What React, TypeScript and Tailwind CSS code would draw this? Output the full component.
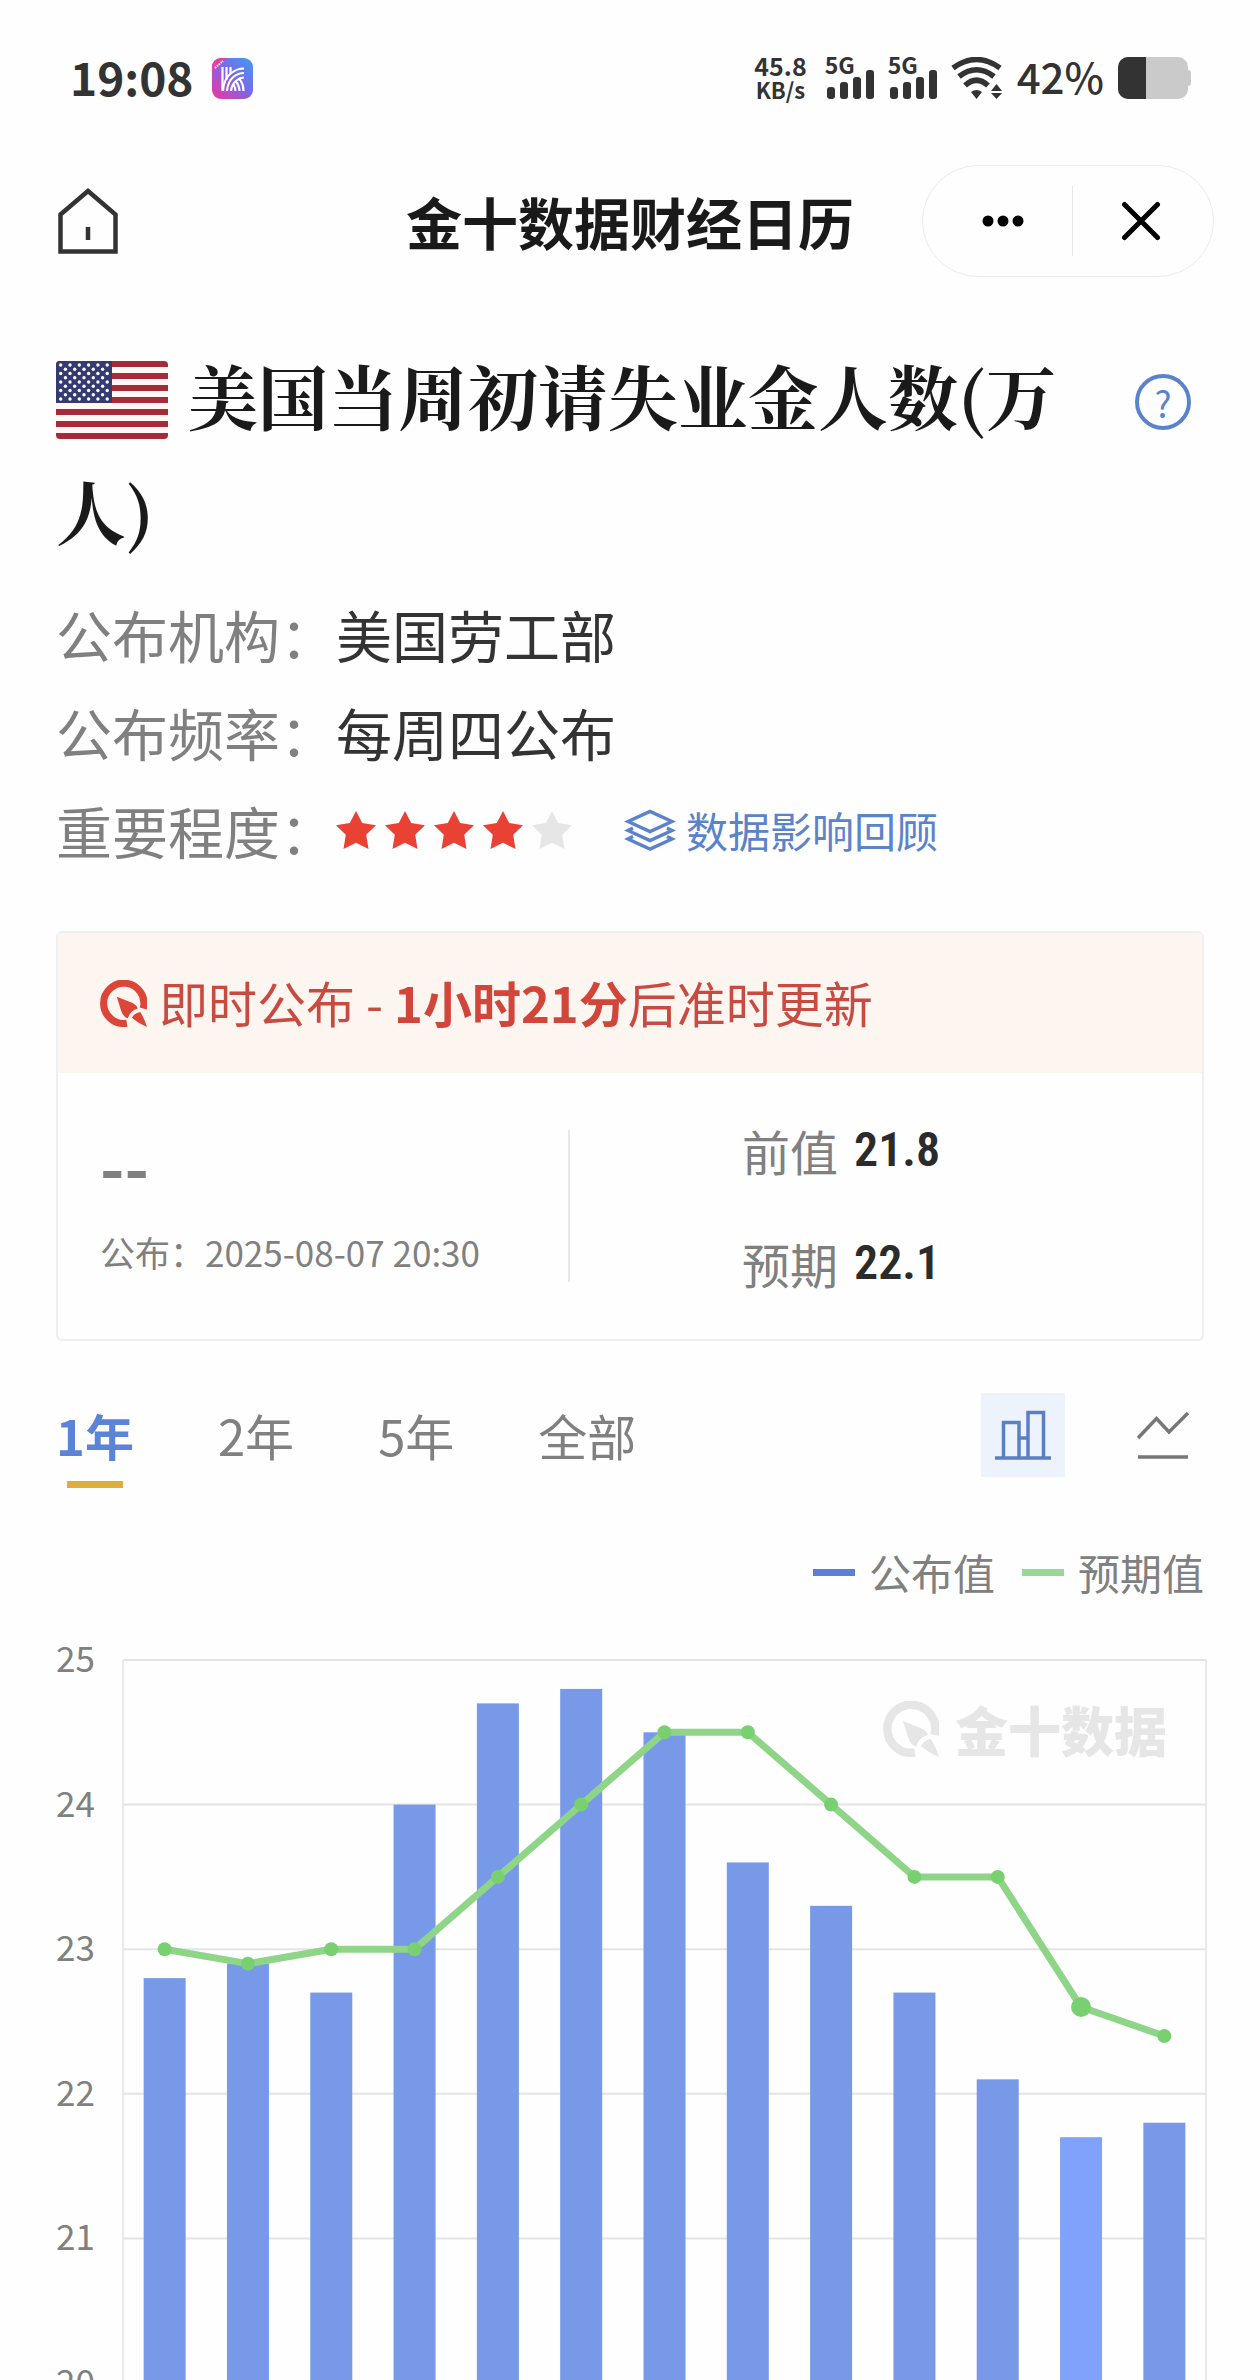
import { useState } from "react";

const sans = "font-['Noto_Sans_CJK_SC',sans-serif]";
const serif =
  "font-['Noto_Serif_CJK_SC','Noto_Serif_SC','Source_Han_Serif_SC','Liberation_Serif','Noto_Sans_CJK_SC',serif]";
const din =
  "font-['Liberation_Sans_Narrow','Roboto_Condensed','Roboto','Noto_Sans_CJK_SC',sans-serif]";

const published = [
  22.8, 22.9, 22.7, 24.0, 24.7, 24.8, 24.5, 23.6, 23.3, 22.7, 22.1, 21.7, 21.8,
];
const forecast = [
  23, 22.9, 23, 23, 23.5, 24, 24.5, 24.5, 24, 23.5, 23.5, 22.6, 22.4,
];
const ticks = [25, 24, 23, 22, 21, 20];
const activeIndex = 11;

const AppBadge = () => (
  <svg viewBox="0 0 41 41" className="size-[41px]" aria-hidden="true">
    <defs>
      <linearGradient id="badge" x1="0" y1="1" x2="1" y2="0">
        <stop offset="0" stopColor="#ec359c" />
        <stop offset="0.25" stopColor="#c04ac0" />
        <stop offset="0.5" stopColor="#7e66e4" />
        <stop offset="1" stopColor="#3f9cf0" />
      </linearGradient>
    </defs>
    <rect width="41" height="41" rx="9" fill="url(#badge)" />
    <path d="M0 13V9a9 9 0 0 1 9-9h6z" fill="#e8409c" />
    <path
      d="M3 10l8-7"
      stroke="#fff"
      strokeWidth="2"
      strokeDasharray="1.5 1"
      fill="none"
    />
    <g stroke="#fff" strokeWidth="2.200" fill="none">
      <path d="M10.500 9v24M14.500 9v13M18.500 9v7" />
      <path d="M32 10.500C25 10.500 12 15 11 33" />
      <path d="M32 15C26 15 16 19 15 33" />
      <path d="M32 19.500C28 19.500 20 23 19 33" />
      <path d="M31.500 33c0-6-2-10-5-13M27.500 33c0-4-1.500-7-4-10M23.500 33c0-3-1-5-2-6.500" />
    </g>
  </svg>
);

const Signal = () => (
  <div className="flex h-[42px] flex-col justify-between">
    <span className="h-[17px] text-[23px] leading-[15px] font-bold">5G</span>
    <div className="-mt-1 ml-0.5 flex items-end gap-[5px]">
      <i className="h-[12px] w-[8px] rounded-[3px] bg-[#333]" />
      <i className="h-[17px] w-[8px] rounded-[3px] bg-[#333]" />
      <i className="h-[22px] w-[8px] rounded-[3px] bg-[#333]" />
      <i className="h-[29px] w-[8px] rounded-[3px] bg-[#333]" />
    </div>
  </div>
);

const Wifi = () => (
  <svg viewBox="0 0 52 42" className="h-[42px] w-[52px]" aria-label="Wi-Fi">
    <g stroke="#333" strokeWidth="5.500" fill="none">
      <path d="M2 11Q25.500-6 49 11" />
      <path d="M8 19.500Q25.500 6 43 19.500" />
      <path d="M14 28.500Q25.500 18 37 28.500" />
    </g>
    <path
      d="M20 35q5.500-4 11 0l-5.500 7zM40 34h11l-5.500-7zM40 36h11l-5.500 6z"
      fill="#333"
    />
  </svg>
);

const StatusBar = () => (
  <div className="flex h-[156px] shrink-0 items-center justify-between pr-[69px] pl-[70px] text-[#333]">
    <div className="flex items-center gap-[18px]">
      <span className="pb-1 text-[46px] leading-none font-bold">19:08</span>
      <AppBadge />
    </div>
    <div className="flex items-center gap-[14px]">
      <div className="flex flex-col items-center pr-[4px] pb-0.5 font-bold">
        <span className="text-[25px] leading-[25px]">45.8</span>
        <span className="text-[22px] leading-[23px]">KB/s</span>
      </div>
      <Signal />
      <Signal />
      <Wifi />
      <span className="pb-1 text-[42px] leading-none font-medium">42%</span>
      <div className="flex items-center">
        <div className="h-[42px] w-[70px] overflow-hidden rounded-[10px] bg-[#cacaca]">
          <div className="h-full w-2/5 bg-[#333]" />
        </div>
        <div className="h-[16px] w-[3px] rounded-r bg-[#cacaca]" />
      </div>
    </div>
  </div>
);

const NavBar = () => (
  <header className="grid h-[130px] shrink-0 grid-cols-[1fr_auto_1fr] items-center px-[46px]">
    <button aria-label="首页" className="ml-3 w-[60px]">
      <svg viewBox="0 0 60 66" fill="none" stroke="#333" strokeWidth="4.500">
        <path d="M2.500 26.500L30 3L57.500 26.500V63.500H2.500Z" />
        <path d="M30 39v13" />
      </svg>
    </button>
    <h1 className="text-[56px] leading-[80px] font-bold text-[#1a1a1a]">
      金十数据财经日历
    </h1>
    <div className="flex h-[112px] w-[292px] items-center justify-self-end rounded-full border border-[#ececec]">
      <button aria-label="更多" className="flex flex-1 justify-center pl-3">
        <svg viewBox="0 0 42 12" className="h-[12px] w-[42px]">
          <circle cx="6" cy="6" r="5.500" />
          <circle cx="21" cy="6" r="5.500" />
          <circle cx="36" cy="6" r="5.500" />
        </svg>
      </button>
      <div className="h-[70px] w-px bg-[#e6e6e6]" />
      <button aria-label="关闭" className="flex flex-1 justify-center pr-1">
        <svg
          viewBox="0 0 40 40"
          className="size-[40px]"
          stroke="#000"
          strokeWidth="5"
          strokeLinecap="round"
        >
          <path d="M3.500 3.500l33 33M36.500 3.500l-33 33" />
        </svg>
      </button>
    </div>
  </header>
);

const Flag = () => (
  <svg
    viewBox="0 0 112 78"
    className="mr-[20px] mb-[14px] inline-block h-[78px] w-[112px] rounded align-middle"
    role="img"
    aria-label="美国"
  >
    <rect width="112" height="78" fill="#fff8f4" />
    {[0, 1, 2, 3, 4, 5, 6].map((i) => (
      <rect key={i} y={i * 12} width="112" height="6" fill="#a62a38" />
    ))}
    <rect width="56" height="42" fill="#353a72" />
    {Array.from({ length: 9 }).map((_, row) =>
      Array.from({ length: row % 2 ? 5 : 6 }).map((_, col) => (
        <circle
          key={`${row}-${col}`}
          cx={4.7 + col * 9.3 + (row % 2 ? 4.7 : 0)}
          cy={4 + row * 4.25}
          r="1.700"
          fill="#fff"
        />
      ))
    )}
  </svg>
);

const Star = ({ on }: { on: boolean }) => (
  <svg viewBox="0 0 40 38" className="h-[38px] w-[40px]" aria-hidden="true">
    <path
      d="M20 0l6.200 12 13.800 2.200-9.800 9.600L32.500 38 20 31.700 7.500 38l2.300-14.200L0 14.200 13.800 12z"
      fill={on ? "#e94235" : "#e6e6e6"}
    />
  </svg>
);

// Jin10 mark: open ring with a needle pointing out of the gap
const Mark = ({ className }: { className: string }) => (
  <svg viewBox="0 0 56 56" className={className} aria-hidden="true">
    <path
      d="M51.500 34A24 24 0 1 0 32 51.500"
      fill="none"
      stroke="currentColor"
      strokeWidth="8.500"
    />
    <path
      d="M20 20l19 7.500q5 3 6 6.500-9 2-12 12-6-3-8-10zM48 38q5 8 8 18-10-4-18-11 3-6 10-7z"
      fill="currentColor"
    />
  </svg>
);

const InfoRow = ({
  label,
  children,
}: {
  label: string;
  children: React.ReactNode;
}) => (
  <div className="flex h-[98px] items-center text-[56px] leading-none">
    <dt className="text-[#808080]">{label}：</dt>
    <dd className="flex items-center text-[#333]">{children}</dd>
  </div>
);

const Chart = () => {
  const left = 67;
  const right = 1150;
  const top = 45;
  const unit = 144.6;
  const slot = (right - left) / published.length;
  const x = (i: number) => left + slot * (i + 0.5);
  const y = (v: number) => top + (25 - v) * unit;
  const bottom = y(19);

  return (
    <svg
      viewBox="0 0 1151 920"
      className="block h-auto w-full"
      role="img"
      aria-label="公布值与预期值"
    >
      {ticks.map((t) => (
        <g key={t}>
          <path
            d={`M${left} ${y(t)}H${right}`}
            stroke="#e4e4e4"
            strokeWidth="2"
          />
          <text x="0" y={y(t) + 12} fontSize="35" fill="#808080">
            {t}
          </text>
        </g>
      ))}
      <path
        d={`M${left} ${top}V${bottom}M${right} ${top}V${bottom}`}
        stroke="#e9e9e9"
        strokeWidth="2"
      />
      {published.map((v, i) => (
        <rect
          key={i}
          x={x(i) - 21}
          y={y(v)}
          width="42"
          height={bottom - y(v)}
          fill={i === activeIndex ? "#80a2fc" : "#7799e8"}
        />
      ))}
      <polyline
        points={forecast.map((v, i) => `${x(i)},${y(v)}`).join(" ")}
        fill="none"
        stroke="#8fd588"
        strokeWidth="7"
        strokeLinejoin="round"
      />
      {forecast.map((v, i) => (
        <circle
          key={i}
          cx={x(i)}
          cy={y(v)}
          r={i === activeIndex ? 10 : 7}
          fill="#79d071"
        />
      ))}
    </svg>
  );
};

const ranges = ["1年", "2年", "5年", "全部"];

const App = () => {
  const [range, setRange] = useState("1年");

  return (
    <div
      className={`flex h-screen flex-col overflow-hidden bg-[#fefefe] ${sans}`}
    >
      <StatusBar />
      <NavBar />

      <main className="flex min-h-0 flex-1 flex-col px-14">
        <div className="flex shrink-0 items-start justify-between pt-[52px]">
          <h2
            className={`flex-1 text-[70px] leading-[113px] font-bold text-[#1a1a1a] ${serif}`}
          >
            <Flag />
            美国当周初请失业金人数(万人)
          </h2>
          <button
            aria-label="说明"
            className="mt-[36px] mr-[13px] ml-[70px] flex size-[56px] items-center justify-center rounded-full border-4 border-[#5b83cc] text-[36px] leading-none text-[#5b83cc]"
          >
            ?
          </button>
        </div>

        <dl className="mt-[19px] shrink-0">
          <InfoRow label="公布机构">美国劳工部</InfoRow>
          <InfoRow label="公布频率">每周四公布</InfoRow>
          <InfoRow label="重要程度">
            <span className="flex gap-[9px]" role="img" aria-label="4星">
              {[1, 2, 3, 4, 5].map((n) => (
                <Star key={n} on={n <= 4} />
              ))}
            </span>
            <a
              href="#review"
              className="ml-[52px] flex items-center gap-[10px] text-[42px] text-[#5b83cc]"
            >
              <svg
                viewBox="0 0 52 42"
                className="h-[42px] w-[52px]"
                fill="none"
                stroke="currentColor"
                strokeWidth="3.500"
              >
                <path d="M4 12.500L26 2.500l22 10L26 22.500z" />
                <path d="M9 19l-5 2.500L26 31.500l22-10L43 19" />
                <path d="M9 27.500L4 30l22 10 22-10-5-2.500" />
              </svg>
              数据影响回顾
            </a>
          </InfoRow>
        </dl>

        <section className="mt-[52px] shrink-0 rounded-md border-2 border-[#efeff1]">
          <div className="flex h-[140px] items-center bg-[#fdf5ef] pl-[42px] text-[#c94a40]">
            <Mark className="size-[47px] text-[#dc4638]" />
            <p className="ml-[12px] pb-1 text-[49px] leading-none">
              即时公布 - <b className="text-[#d2453a]">1小时21分</b>
              后准时更新
            </p>
          </div>
          <div className="flex h-[266px] items-center">
            <div className="flex h-[152px] w-[512px] flex-col justify-between border-r-2 border-[#e8e8e8] pl-[42px] text-[#808080]">
              <div className="mt-[4px] text-[66px] leading-[60px] font-bold">
                --
              </div>
              <div className="mb-[6px] text-[35px] leading-[48px]">
                公布：2025-08-07 20:30
              </div>
            </div>
            <div className="flex flex-1 flex-col gap-[49px] pl-[172px] text-[48px] leading-[64px] text-[#808080]">
              <div className="flex items-center gap-[16px]">
                前值
                <span
                  className={`text-[48px] font-semibold text-[#2b2b2b] ${din}`}
                >
                  21.8
                </span>
              </div>
              <div className="flex items-center gap-[16px]">
                预期
                <span
                  className={`text-[48px] font-semibold text-[#2b2b2b] ${din}`}
                >
                  22.1
                </span>
              </div>
            </div>
          </div>
        </section>

        <div className="mt-[52px] flex h-[84px] shrink-0 items-center justify-between">
          <div role="tablist" className="flex gap-[84px]">
            {ranges.map((r) => (
              <button
                key={r}
                role="tab"
                aria-selected={r === range}
                onClick={() => setRange(r)}
                className={`relative text-[49px] leading-[72px] ${
                  r === range ? "font-bold text-[#5b83d6]" : "text-[#808080]"
                }`}
              >
                {r}
                {r === range && (
                  <span className="absolute top-full left-1/2 mt-[10px] h-[7px] w-[56px] -translate-x-1/2 bg-[#deae3c]" />
                )}
              </button>
            ))}
          </div>
          <div className="flex items-center gap-[72px] pr-[15px]">
            <button
              aria-label="柱状图"
              className="flex size-[84px] items-center justify-center bg-[#edf3fd]"
            >
              <svg
                viewBox="0 0 56 50"
                className="h-[50px] w-[56px]"
                fill="none"
                stroke="#5b7fc4"
                strokeWidth="3.500"
              >
                <path d="M0 48h56M8.500 48V12.500h15.500V48M24 28h9M33 48V2.500h15.500V48" />
              </svg>
            </button>
            <button aria-label="折线图">
              <svg
                viewBox="0 0 52 48"
                className="h-[48px] w-[52px]"
                fill="none"
                stroke="#777"
                strokeWidth="3.500"
              >
                <path d="M1 27L19.500 7.500 32 21 51 2M1 46h50" />
              </svg>
            </button>
          </div>
        </div>

        <div className="mt-[65px] flex h-[60px] shrink-0 items-center justify-end gap-[27px] text-[42px] leading-[60px] text-[#808080]">
          <span className="flex items-center gap-[14px]">
            <i className="h-[7px] w-[42px] bg-[#5b7fd9]" />
            公布值
          </span>
          <span className="flex items-center gap-[14px]">
            <i className="h-[7px] w-[42px] bg-[#97d992]" />
            预期值
          </span>
        </div>

        <div className="relative mt-[13px] -mr-[3px] min-h-0 flex-1 overflow-hidden">
          <Chart />
          <div className="absolute top-[84px] right-[40px] flex items-center gap-[16px] text-[53px] leading-[60px] font-black text-[#e6e6e6]">
            <Mark className="size-[56px]" />
            金十数据
          </div>
        </div>
      </main>
    </div>
  );
};

export default App;
